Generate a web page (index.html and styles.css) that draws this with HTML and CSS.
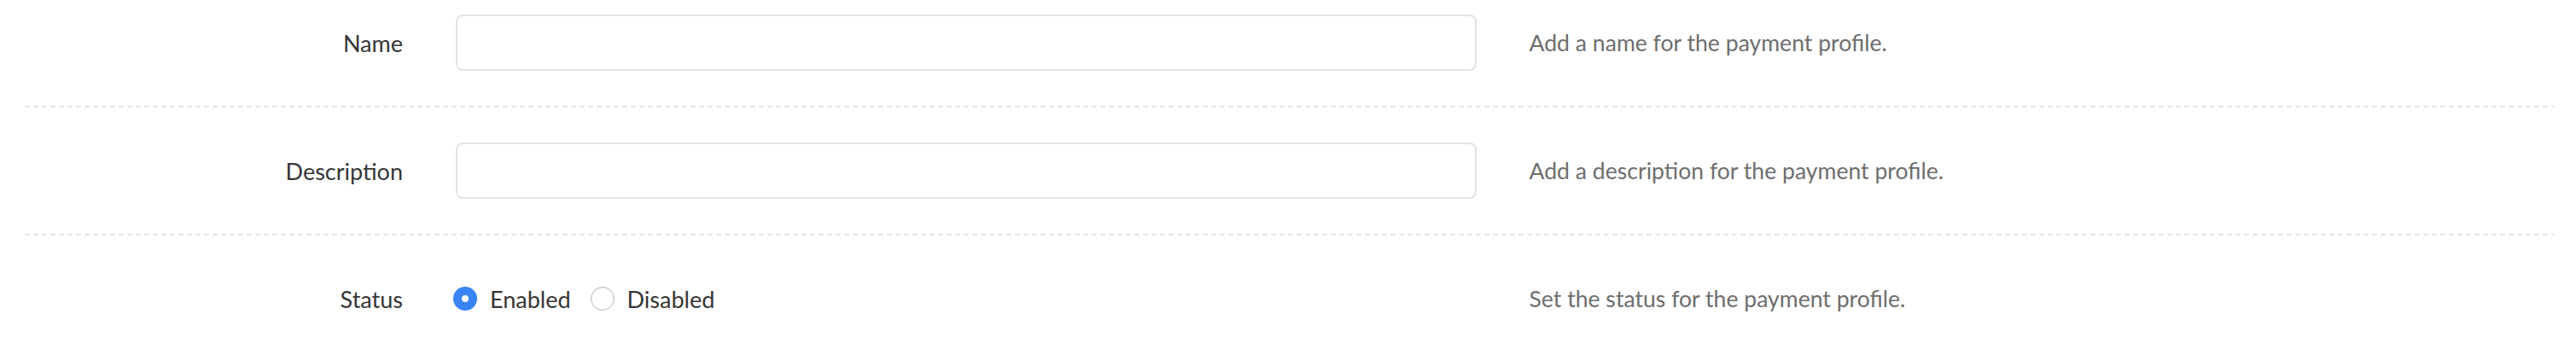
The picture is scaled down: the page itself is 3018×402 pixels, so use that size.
FILE: index.html
```html
<!DOCTYPE html>
<html>

<head>
    <title>Payment Profile</title>
    <link rel="stylesheet" href="styles.css">
</head>

<body>
    <form class="profile-form">
        <div class="field">
            <label class="field-label" for="name">Name</label>
            <div class="field-control">
                <input type="text" id="name" class="text-input">
            </div>
            <p class="field-help">Add a name for the payment profile.</p>
        </div>

        <hr class="divider">

        <div class="field">
            <label class="field-label" for="description">Description</label>
            <div class="field-control">
                <input type="text" id="description" class="text-input">
            </div>
            <p class="field-help">Add a description for the payment profile.</p>
        </div>

        <hr class="divider">

        <div class="field">
            <span class="field-label">Status</span>
            <div class="field-control">
                <label class="radio">
                    <input type="radio" name="status" value="enabled" checked>
                    <span>Enabled</span>
                </label>
                <label class="radio">
                    <input type="radio" name="status" value="disabled">
                    <span>Disabled</span>
                </label>
            </div>
            <p class="field-help">Set the status for the payment profile.</p>
        </div>
    </form>
</body>

</html>
```

FILE: styles.css
```css
body {
    font-family: Lato, "Open Sans", sans-serif;
    font-size: 27px;
    margin: 0;
    padding: 0;
    background-color: #fff;
    color: #363636;
}

.profile-form {
    margin: 0;
}

.field {
    display: grid;
    grid-template-columns: 2fr 5fr 5fr;
    align-items: center;
    padding: 41px 0;
}

.field:first-child {
    padding-top: 17px;
}

.field-label,
.field-control,
.field-help {
    padding: 0 31px;
}

.field-label {
    text-align: right;
}

.field-control {
    display: flex;
    align-items: center;
    min-height: 66px;
}

.field-help {
    margin: 0;
    font-size: 26.6px;
    color: #6e6e6e;
}

.text-input {
    box-sizing: border-box;
    width: 100%;
    height: 66px;
    border: 2px solid #e3e3e3;
    border-radius: 8px;
    background: #fff;
    font: inherit;
    padding: 0 16px;
}

.divider {
    height: 2px;
    margin: 0 26px 0 29px;
    border: 0;
    background: repeating-linear-gradient(to right, #e2e5e9 0 6px, transparent 6px 10px);
}

.radio {
    display: flex;
    align-items: center;
    gap: 15px;
    margin-right: 26px;
}

.radio input {
    appearance: none;
    box-sizing: border-box;
    width: 28px;
    height: 28px;
    margin: 0 0 0 -3px;
    border: 1px solid #b9b9b9;
    border-radius: 50%;
    background: #fff;
    box-shadow: inset 0 1px 2px rgba(0, 0, 0, 0.08);
}

.radio input:checked {
    border: 10px solid #3b84f6;
    box-shadow: none;
}
```
